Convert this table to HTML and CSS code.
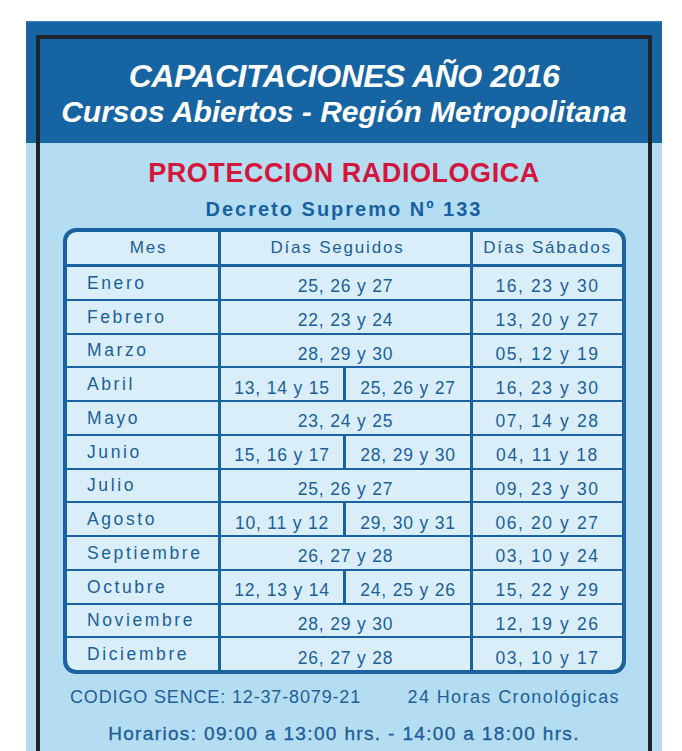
FILE: index.html
```html
<!DOCTYPE html>
<html lang="es">
<head>
<meta charset="utf-8">
<title>Capacitaciones 2016</title>
<link rel="stylesheet" href="styles.css">
</head>
<body>
<div class="panel">
  <div class="frame">
    <header class="head">
      <h1 class="title">CAPACITACIONES AÑO 2016</h1>
      <h2 class="subtitle">Cursos Abiertos - Región Metropolitana</h2>
    </header>
    <h3 class="course">PROTECCION RADIOLOGICA</h3>
    <p class="decree">Decreto Supremo Nº 133</p>
    <div class="schedule">
      <div class="cell th th-mes tl">Mes</div>
      <div class="cell th th-seg span2">Días Seguidos</div>
      <div class="cell th tr">Días Sábados</div>

      <div class="cell month">Enero</div>
      <div class="cell num span2">25, 26 y 27</div>
      <div class="cell num sat">16, 23 y 30</div>

      <div class="cell month">Febrero</div>
      <div class="cell num span2">22, 23 y 24</div>
      <div class="cell num sat">13, 20 y 27</div>

      <div class="cell month">Marzo</div>
      <div class="cell num span2">28, 29 y 30</div>
      <div class="cell num sat">05, 12 y 19</div>

      <div class="cell month">Abril</div>
      <div class="cell num">13, 14 y 15</div>
      <div class="cell num">25, 26 y 27</div>
      <div class="cell num sat">16, 23 y 30</div>

      <div class="cell month">Mayo</div>
      <div class="cell num span2">23, 24 y 25</div>
      <div class="cell num sat">07, 14 y 28</div>

      <div class="cell month">Junio</div>
      <div class="cell num">15, 16 y 17</div>
      <div class="cell num">28, 29 y 30</div>
      <div class="cell num sat">04, 11 y 18</div>

      <div class="cell month">Julio</div>
      <div class="cell num span2">25, 26 y 27</div>
      <div class="cell num sat">09, 23 y 30</div>

      <div class="cell month">Agosto</div>
      <div class="cell num">10, 11 y 12</div>
      <div class="cell num">29, 30 y 31</div>
      <div class="cell num sat">06, 20 y 27</div>

      <div class="cell month">Septiembre</div>
      <div class="cell num span2">26, 27 y 28</div>
      <div class="cell num sat">03, 10 y 24</div>

      <div class="cell month">Octubre</div>
      <div class="cell num">12, 13 y 14</div>
      <div class="cell num">24, 25 y 26</div>
      <div class="cell num sat">15, 22 y 29</div>

      <div class="cell month">Noviembre</div>
      <div class="cell num span2">28, 29 y 30</div>
      <div class="cell num sat">12, 19 y 26</div>

      <div class="cell month bl">Diciembre</div>
      <div class="cell num span2">26, 27 y 28</div>
      <div class="cell num sat br">03, 10 y 17</div>
    </div>
    <div class="meta">
      <span class="code">CODIGO SENCE: 12-37-8079-21</span>
      <span class="dur">24 Horas Cronológicas</span>
    </div>
    <p class="hours">Horarios: 09:00 a 13:00 hrs. - 14:00 a 18:00 hrs.</p>
  </div>
</div>
</body>
</html>
```
FILE: styles.css
```css
html, body {
  margin: 0;
  padding: 0;
  overflow: hidden;
  background: #ffffff;
}

body {
  font-family: "Liberation Sans", Arial, sans-serif;
}

.panel {
  margin: 21px 0 0 26px;
  width: 636px;
  box-sizing: border-box;
  padding: 13px 10px 0;
  background: linear-gradient(#1664a1 0, #1664a1 121px, #b5ddf2 121px);
  border-top: 1px solid #3a83bd;
}

.frame {
  border: 4px solid #1d242b;
  border-bottom: 0;
  min-height: 740px;
  box-sizing: border-box;
}

.head {
  padding-top: 19px;
  text-align: center;
  color: #ffffff;
}

.title {
  margin: 0;
  font: italic 700 32px/36px "Liberation Sans", Arial, sans-serif;
  letter-spacing: -0.5px;
}

.subtitle {
  margin: 0;
  font: italic 700 30px/35px "Liberation Sans", Arial, sans-serif;
}

.course {
  margin: 29px 0 0;
  text-align: center;
  color: #d3163c;
  font: 700 27px/30px "Liberation Sans", Arial, sans-serif;
  letter-spacing: 0.55px;
}

.decree {
  margin: 9px 0 0;
  text-align: center;
  color: #1761a0;
  font: 700 20px/24px "Liberation Sans", Arial, sans-serif;
  letter-spacing: 2px;
}

.schedule {
  margin: 7px 22px 0 23px;
  height: 446px;
  box-sizing: border-box;
  border: 4px solid #1a63a0;
  background: #1a63a0;
  border-radius: 13px;
  display: grid;
  grid-template-columns: 151px 122px 124px 149px;
  grid-template-rows: 33px repeat(12, 1fr);
  column-gap: 3px;
  row-gap: 2px;
  overflow: hidden;
}

.cell {
  background: #d9eef9;
  color: #1c5f98;
  font-size: 17px;
  line-height: 20px;
  display: flex;
  align-items: center;
  justify-content: center;
  white-space: nowrap;
}

.th {
  margin-bottom: 1px;
  letter-spacing: 1.8px;
}

.th-mes {
  padding-left: 12px;
}

.th-seg {
  padding-right: 16px;
}

.span2 {
  grid-column: span 2;
}

.month {
  justify-content: flex-start;
  padding-left: 20px;
  font-size: 17.5px;
  letter-spacing: 2.6px;
}

.num {
  padding-top: 7px;
  font-size: 17.5px;
  letter-spacing: 0.8px;
}

.sat {
  letter-spacing: 1.6px;
}

.tl { border-top-left-radius: 9px; }
.tr { border-top-right-radius: 9px; }
.bl { border-bottom-left-radius: 9px; }
.br { border-bottom-right-radius: 9px; }

.meta {
  display: flex;
  justify-content: space-between;
  margin: 12px 28px 0 30px;
  color: #1e5f98;
  font-size: 18px;
  line-height: 22px;
}

.code {
  letter-spacing: 0.85px;
}

.dur {
  letter-spacing: 1.4px;
}

.hours {
  margin: 15px 0 0;
  text-align: center;
  color: #1d5e97;
  font-size: 19px;
  line-height: 22px;
  letter-spacing: 1.35px;
  -webkit-text-stroke: 0.35px #1d5e97;
}
```
